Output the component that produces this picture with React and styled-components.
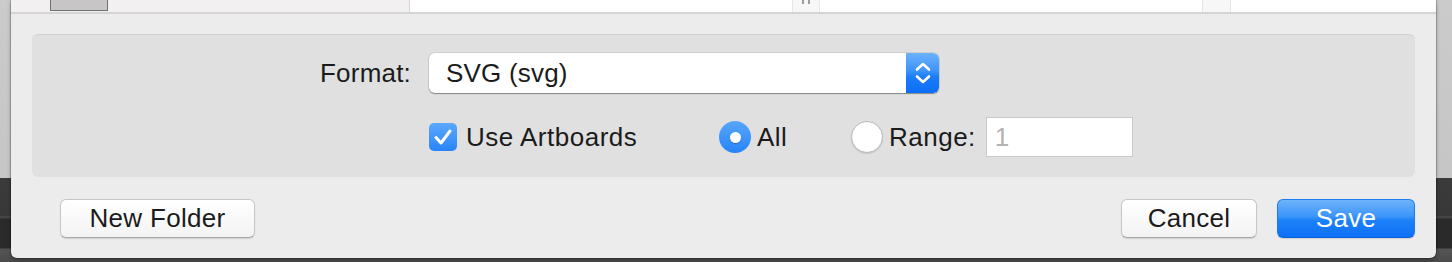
import React from 'react';
import styled, { createGlobalStyle } from 'styled-components';

const GlobalStyle = createGlobalStyle`
  *, *::before, *::after {
    box-sizing: border-box;
  }
  html, body {
    margin: 0;
    padding: 0;
    background: #2e2e2e;
  }
  body {
    font-family: "Liberation Sans", Arial, sans-serif;
  }
`;

const Screen = styled.div`
  width: 1452px;
  height: 262px;
  display: flex;
  overflow: hidden;
  background: linear-gradient(
    to bottom,
    #cbcbcb 0,
    #c6c6c6 178px,
    #3b3b3b 178px,
    #383838 216px,
    #505050 217px,
    #2a2a2a 219px,
    #2a2a2a 248px,
    #555 249px,
    #4a4a4a 262px
  );
`;

const Sheet = styled.div`
  flex: 1;
  min-width: 0;
  margin: 0 16px 4px 11px;
  background: #ececec;
  border-radius: 0 0 6px 6px;
  box-shadow: 0 0 0 1px rgba(0, 0, 0, 0.18), 0 2px 4px rgba(0, 0, 0, 0.3);
  display: flex;
  flex-direction: column;
`;

const FileStrip = styled.div`
  height: 14px;
  display: flex;
  border-bottom: 2px solid #d4d4d4;
  background: #fff;
`;

const NameCell = styled.div`
  width: 399px;
  flex-shrink: 0;
  padding-left: 39px;
  background: #f2f0f0;
  border-right: 1px solid #d6d6d6;
`;

const Thumb = styled.div`
  width: 58px;
  height: 11px;
  background: #c7c5c5;
  border: 1px solid #6f6f6f;
  border-top: none;
`;

const DataCell = styled.div`
  flex: ${(p) => (p.$w ? `0 0 ${p.$w}px` : '1')};
  background: ${(p) => (p.$shade ? '#f7f7f7' : '#fff')};
  display: flex;
  justify-content: center;
  gap: 4px;
  border-left: ${(p) => (p.$shade ? '1px solid #e6e6e6' : 'none')};
  border-right: ${(p) => (p.$shade ? '1px solid #e6e6e6' : 'none')};
`;

const Tick = styled.span`
  width: 2px;
  height: 4px;
  background: #9d9d9d;
`;

const Options = styled.div`
  margin: 20px 21px 0 21px;
  height: 143px;
  background: #e0e0e0;
  border-radius: 6px;
  border-top: 1px solid #d1d1d1;
  display: grid;
  grid-template-columns: 379px 1fr;
  grid-template-rows: 40px 40px;
  column-gap: 18px;
  row-gap: 24px;
  padding-top: 18px;
  align-items: center;
`;

const Label = styled.div`
  font-size: 26px;
  color: #1b1b1b;
  text-align: right;
  letter-spacing: 0.2px;
`;

const Popup = styled.div`
  width: 510px;
  height: 40px;
  display: flex;
  background: #fff;
  border-radius: 6px;
  box-shadow: 0 0 0 1px rgba(0, 0, 0, 0.08), 0 1px 1px rgba(0, 0, 0, 0.35);
  overflow: hidden;
`;

const PopupText = styled.div`
  flex: 1;
  font-size: 26px;
  color: #1b1b1b;
  padding-left: 17px;
  line-height: 40px;
  letter-spacing: 0.2px;
`;

const Stepper = styled.div`
  width: 33px;
  display: flex;
  align-items: center;
  justify-content: center;
  background: linear-gradient(to bottom, #6db2fb 0%, #3b93fa 45%, #1a7cf8 60%, #0c6ef6 100%);
`;

const ControlRow = styled.div`
  display: flex;
  align-items: center;
  height: 40px;
`;

const Group = styled.label`
  display: flex;
  align-items: center;
  flex-shrink: 0;
  width: ${(p) => (p.$w ? `${p.$w}px` : 'auto')};
  gap: ${(p) => p.$gap || 8}px;
  font-size: 26px;
  color: #1b1b1b;
  letter-spacing: 0.5px;
`;

const CheckBox = styled.span`
  width: 28px;
  height: 28px;
  border-radius: 5px;
  background: linear-gradient(to bottom, #5aa8fb, #2885f9);
  display: flex;
  align-items: center;
  justify-content: center;
`;

const Radio = styled.span`
  width: 32px;
  height: 32px;
  border-radius: 50%;
  display: flex;
  align-items: center;
  justify-content: center;
  background: ${(p) =>
    p.$on ? 'linear-gradient(to bottom, #58a6fb, #2684f9)' : '#fff'};
  border: ${(p) => (p.$on ? 'none' : '1px solid #b9b9b9')};
  box-shadow: ${(p) => (p.$on ? 'none' : '0 1px 1px rgba(0,0,0,0.12)')};
`;

const Dot = styled.span`
  width: 11px;
  height: 11px;
  border-radius: 50%;
  background: #fff;
  box-shadow: 0 1px 1px rgba(0, 0, 0, 0.25);
`;

const RangeInput = styled.div`
  width: 147px;
  height: 40px;
  margin-left: 10px;
  background: #fff;
  border: 1px solid #c9c9c9;
  font-size: 26px;
  line-height: 38px;
  padding-left: 8px;
  color: #b3b3b3;
`;

const Footer = styled.div`
  flex: 1;
  display: flex;
  align-items: center;
  justify-content: space-between;
  padding: 2px 21px 0 49px;
`;

const ButtonGroup = styled.div`
  display: flex;
  gap: 20px;
`;

const Button = styled.button`
  width: ${(p) => p.$w}px;
  height: 39px;
  font-family: "Liberation Sans", Arial, sans-serif;
  font-size: 26px;
  letter-spacing: 0.3px;
  border-radius: 6px;
  padding: 0;
  color: ${(p) => (p.$primary ? '#fff' : '#1b1b1b')};
  border: 1px solid ${(p) => (p.$primary ? '#1d7cf0' : '#c6c6c6')};
  border-bottom-color: ${(p) => (p.$primary ? '#0b62d8' : '#a9a9a9')};
  background: ${(p) =>
    p.$primary
      ? 'linear-gradient(to bottom, #6fb4fb 0%, #3a94fa 45%, #1c80f9 55%, #0e70f6 100%)'
      : 'linear-gradient(to bottom, #ffffff, #f3f3f3)'};
  box-shadow: 0 1px 1px rgba(0, 0, 0, 0.12);
`;

export default function App() {
  return (
    <>
      <GlobalStyle />
      <Screen>
        <Sheet>
          <FileStrip>
            <NameCell>
              <Thumb />
            </NameCell>
            <DataCell $w={382} />
            <DataCell $w={28} $shade>
              <Tick />
              <Tick />
            </DataCell>
            <DataCell $w={382} />
            <DataCell $w={29} $shade />
            <DataCell />
          </FileStrip>

          <Options>
            <Label>Format:</Label>
            <Popup>
              <PopupText>SVG (svg)</PopupText>
              <Stepper>
                <svg width="16" height="24" viewBox="0 0 16 24" fill="none">
                  <path d="M2 8.5 L8 3 L14 8.5" stroke="#fff" strokeWidth="2.6" strokeLinecap="round" strokeLinejoin="round" />
                  <path d="M2 15.5 L8 21 L14 15.5" stroke="#fff" strokeWidth="2.6" strokeLinecap="round" strokeLinejoin="round" />
                </svg>
              </Stepper>
            </Popup>

            <div />
            <ControlRow>
              <Group $w={290} $gap={9}>
                <CheckBox>
                  <svg width="20" height="18" viewBox="0 0 20 18" fill="none">
                    <path d="M3 9.5 L8 15 L17 3" stroke="#fff" strokeWidth="3" strokeLinecap="round" strokeLinejoin="round" />
                  </svg>
                </CheckBox>
                Use Artboards
              </Group>
              <Group $w={132} $gap={6}>
                <Radio $on>
                  <Dot />
                </Radio>
                All
              </Group>
              <Group $gap={6}>
                <Radio />
                Range:
              </Group>
              <RangeInput>1</RangeInput>
            </ControlRow>
          </Options>

          <Footer>
            <Button $w={195}>New Folder</Button>
            <ButtonGroup>
              <Button $w={136}>Cancel</Button>
              <Button $w={138} $primary>Save</Button>
            </ButtonGroup>
          </Footer>
        </Sheet>
      </Screen>
    </>
  );
}
